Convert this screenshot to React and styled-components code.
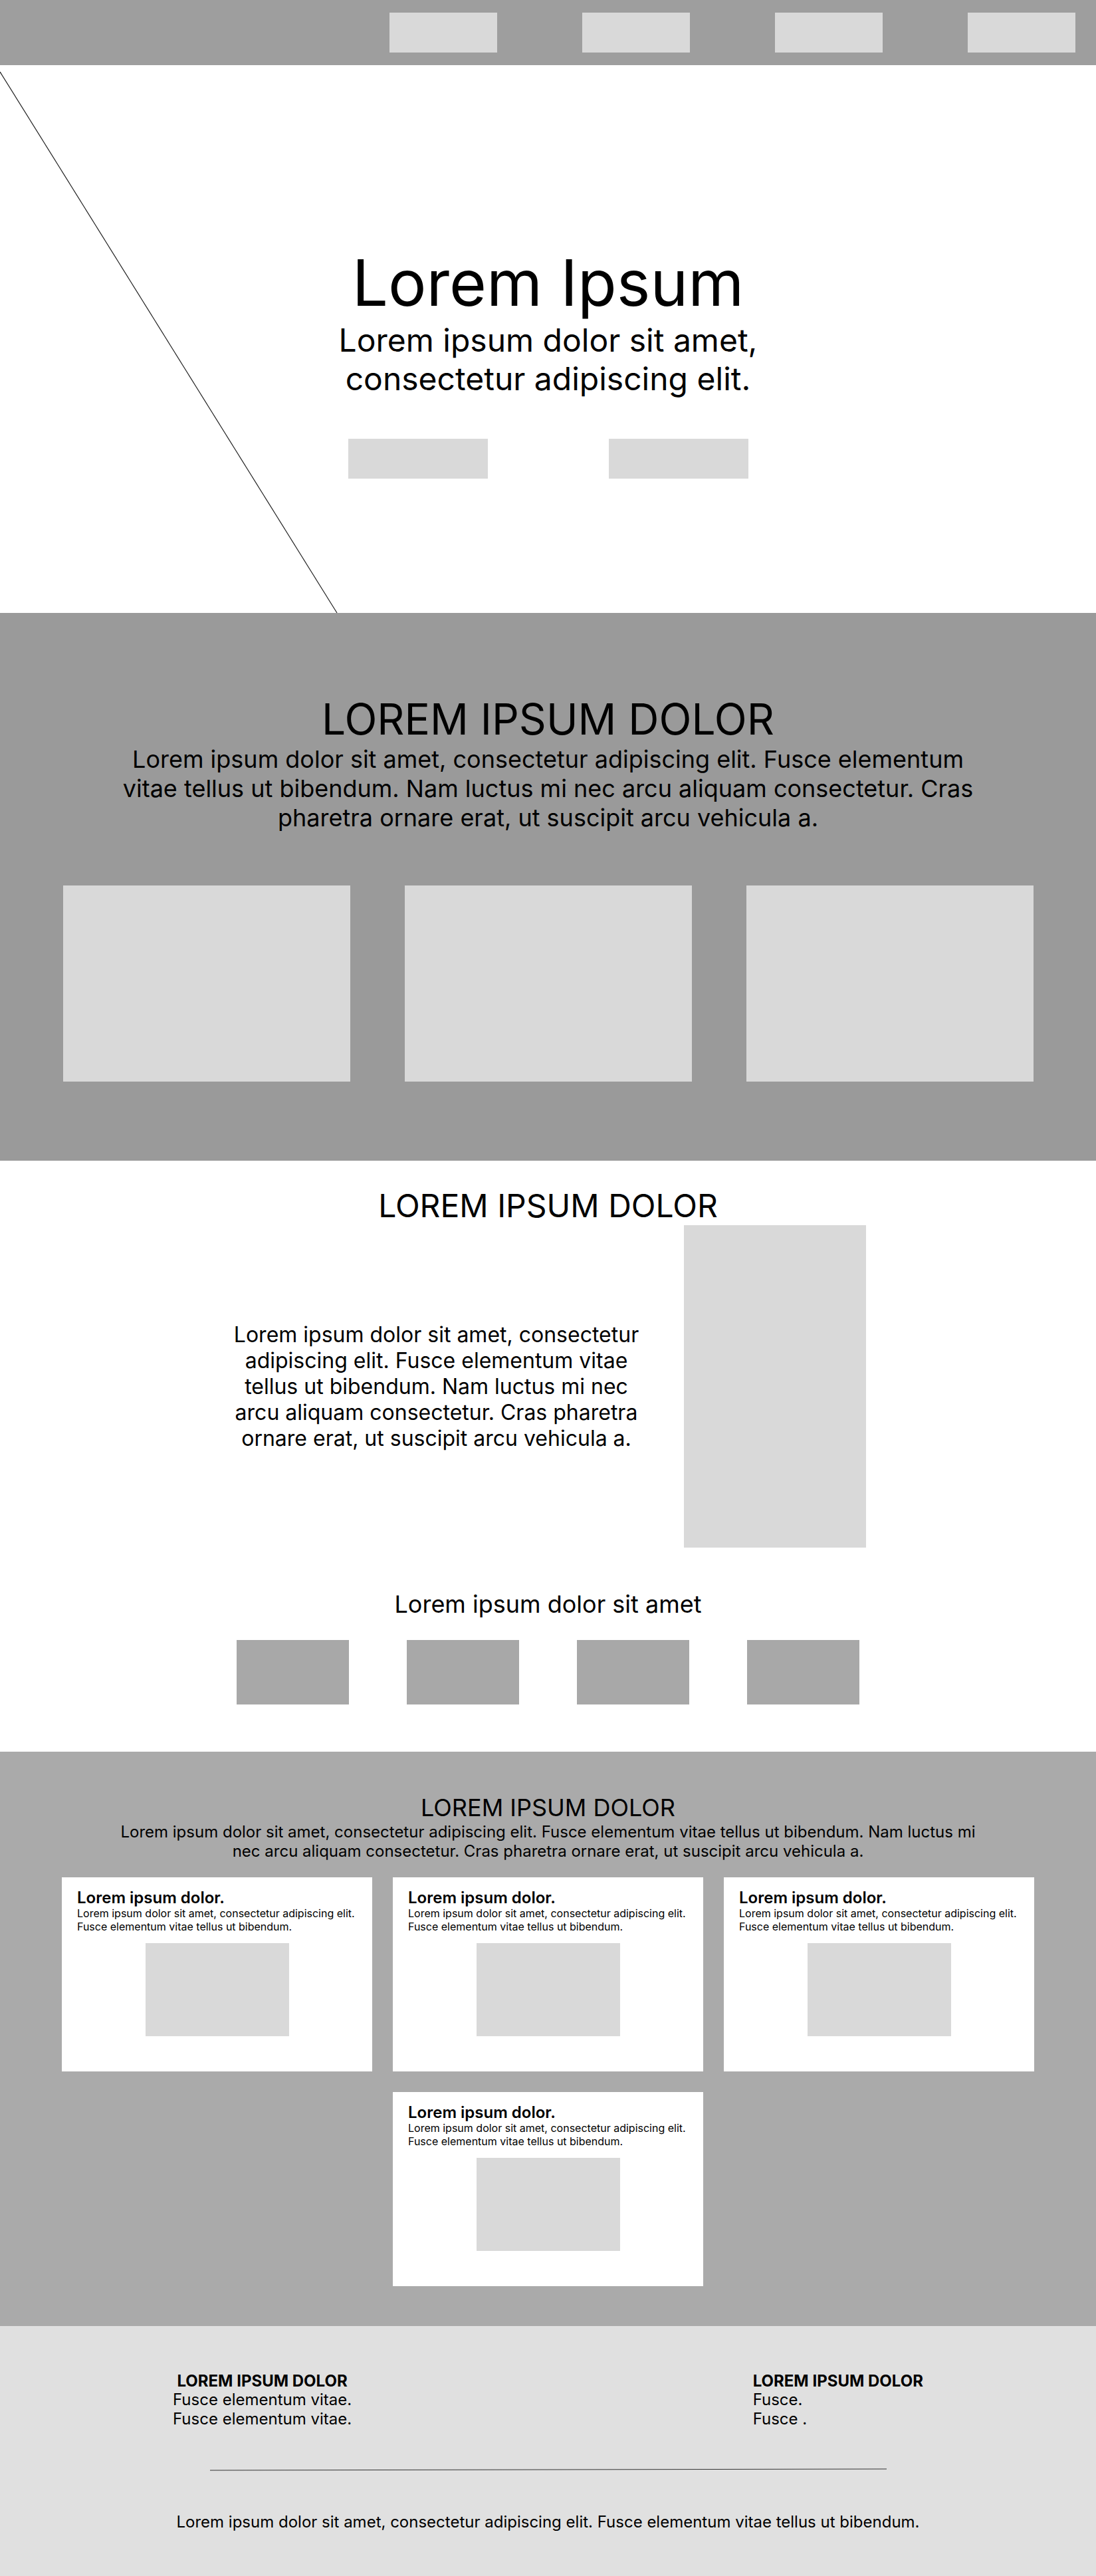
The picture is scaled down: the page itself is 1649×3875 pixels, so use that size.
import styled, { createGlobalStyle } from 'styled-components'

const GlobalStyle = createGlobalStyle`
  html, body {
    margin: 0;
    padding: 0;
    background: #ffffff;
  }
  body {
    font-family: Inter, "Noto Sans", "Liberation Sans", sans-serif;
    color: #000;
  }
  * { box-sizing: border-box; }
`;

const Page = styled.div`
  width: 1649px;
  display: flex;
  flex-direction: column;
`;

/* ---------- nav ---------- */
const NavBar = styled.header`
  height: 98px;
  background: #9e9e9e;
  display: flex;
  justify-content: flex-end;
  align-items: center;
  gap: 128px;
  padding-right: 31px;
`;

const NavButton = styled.div`
  width: 162px;
  height: 60px;
  background: #d9d9d9;
`;

/* ---------- hero ---------- */
const Hero = styled.section`
  position: relative;
  height: 824px;
  padding-top: 269px;
  display: flex;
  flex-direction: column;
  align-items: center;
  overflow: hidden;
`;

const Diagonal = styled.svg`
  position: absolute;
  left: 0;
  top: 0;
  pointer-events: none;
`;

const HeroTitle = styled.h1`
  margin: 0;
  font-size: 96px;
  line-height: 116px;
  font-weight: 400;
  text-align: center;
`;

const HeroSub = styled.p`
  margin: 0;
  font-size: 48px;
  line-height: 58px;
  text-align: center;
`;

const HeroButtons = styled.div`
  display: flex;
  gap: 182px;
  margin-top: 61px;
`;

const HeroButton = styled.div`
  width: 210px;
  height: 60px;
  background: #d9d9d9;
`;

/* ---------- shared ---------- */
const Band = styled.section`
  background: ${props => props.bg || '#fff'};
  padding: ${props => props.pad};
  display: flex;
  flex-direction: column;
  align-items: center;
`;

const Heading = styled.h2`
  margin: 0;
  font-weight: 400;
  font-size: ${props => props.size}px;
  line-height: ${props => Math.round(props.size * 1.21)}px;
  text-align: center;
`;

const Lead = styled.p`
  margin: 0;
  width: 1300px;
  font-size: ${props => props.size}px;
  line-height: ${props => Math.round(props.size * 1.21)}px;
  text-align: center;
`;

const Placeholder = styled.div`
  width: ${props => props.w}px;
  height: ${props => props.h}px;
  background: ${props => props.bg || '#d9d9d9'};
  flex-shrink: 0;
`;

/* ---------- features ---------- */
const FeatureRow = styled.div`
  display: grid;
  grid-template-columns: repeat(3, 432px);
  gap: 82px;
  margin-top: 80px;
`;

/* ---------- about ---------- */
const AboutRow = styled.div`
  display: flex;
  align-items: center;
  gap: 62px;
`;

const AboutText = styled.p`
  margin: 0;
  width: 620px;
  font-size: 32px;
  line-height: 39px;
  text-align: center;
`;

const SubHeading = styled.h3`
  margin: 63px 0 0;
  font-weight: 400;
  font-size: 36px;
  line-height: 44px;
  text-align: center;
`;

const Squares = styled.div`
  display: flex;
  gap: 87px;
  margin-top: 32px;
`;

/* ---------- cards ---------- */
const CardGrid = styled.div`
  width: 1463px;
  display: flex;
  flex-wrap: wrap;
  justify-content: center;
  gap: 31px 31px;
  margin-top: 25px;
`;

const Card = styled.div`
  width: 467px;
  height: 292px;
  background: #fff;
  padding: 16px 23px 0;
  display: flex;
  flex-direction: column;
`;

const CardTitle = styled.h4`
  margin: 0;
  font-size: 24px;
  line-height: 29px;
  font-weight: 600;
`;

const CardBody = styled.p`
  margin: 0;
  font-size: 16px;
  line-height: 19.5px;
  white-space: nowrap;
`;

const CardImage = styled.div`
  width: 216px;
  height: 140px;
  background: #d9d9d9;
  margin: 15px auto 0;
`;

/* ---------- footer ---------- */
const Footer = styled.footer`
  background: #e0e0e0;
  height: 377px;
  padding-top: 69px;
  display: flex;
  flex-direction: column;
  align-items: center;
`;

const FooterCols = styled.div`
  width: 100%;
  padding: 0 260px;
  display: flex;
  justify-content: space-between;
`;

const FooterCol = styled.div`
  display: flex;
  flex-direction: column;
  align-items: ${props => props.center ? 'center' : 'flex-start'};
`;

const FooterHead = styled.div`
  font-size: 24px;
  line-height: 27px;
  font-weight: 700;
`;

const FooterLine = styled.div`
  font-size: 24px;
  line-height: 29px;
`;

const Rule = styled.svg`
  display: block;
  margin-top: 60px;
`;

const Copy = styled.p`
  margin: 62px 0 0;
  font-size: 24px;
  line-height: 29px;
  text-align: center;
`;

const cards = [0, 1, 2, 3];

export default function App() {
  return (
    <Page>
      <GlobalStyle />
      <NavBar>
        <NavButton />
        <NavButton />
        <NavButton />
        <NavButton />
      </NavBar>

      <Hero>
        <Diagonal width="520" height="824" viewBox="0 0 520 824">
          <line x1="0" y1="10" x2="507" y2="824" stroke="#222" strokeWidth="1.2" />
        </Diagonal>
        <HeroTitle>Lorem Ipsum</HeroTitle>
        <HeroSub>Lorem ipsum dolor sit amet,<br />consectetur adipiscing elit.</HeroSub>
        <HeroButtons>
          <HeroButton />
          <HeroButton />
        </HeroButtons>
      </Hero>

      <Band bg="#9a9a9a" pad="121px 0 119px">
        <Heading size={64}>LOREM IPSUM DOLOR</Heading>
        <Lead size={36}>
          Lorem ipsum dolor sit amet, consectetur adipiscing elit. Fusce elementum vitae tellus ut bibendum. Nam luctus mi nec arcu aliquam consectetur. Cras pharetra ornare erat, ut suscipit arcu vehicula a.
        </Lead>
        <FeatureRow>
          <Placeholder w={432} h={295} />
          <Placeholder w={432} h={295} />
          <Placeholder w={432} h={295} />
        </FeatureRow>
      </Band>

      <Band pad="39px 0 71px">
        <Heading size={48}>LOREM IPSUM DOLOR</Heading>
        <AboutRow>
          <AboutText>
            Lorem ipsum dolor sit amet, consectetur adipiscing elit. Fusce elementum vitae tellus ut bibendum. Nam luctus mi nec arcu aliquam consectetur. Cras pharetra ornare erat, ut suscipit arcu vehicula a.
          </AboutText>
          <Placeholder w={274} h={485} />
        </AboutRow>
        <SubHeading>Lorem ipsum dolor sit amet</SubHeading>
        <Squares>
          <Placeholder w={169} h={97} bg="#a8a8a8" />
          <Placeholder w={169} h={97} bg="#a8a8a8" />
          <Placeholder w={169} h={97} bg="#a8a8a8" />
          <Placeholder w={169} h={97} bg="#a8a8a8" />
        </Squares>
      </Band>

      <Band bg="#aaaaaa" pad="62px 0 60px">
        <Heading size={36}>LOREM IPSUM DOLOR</Heading>
        <Lead size={24}>
          Lorem ipsum dolor sit amet, consectetur adipiscing elit. Fusce elementum vitae tellus ut bibendum. Nam luctus mi nec arcu aliquam consectetur. Cras pharetra ornare erat, ut suscipit arcu vehicula a.
        </Lead>
        <CardGrid>
          {cards.map(i => (
            <Card key={i}>
              <CardTitle>Lorem ipsum dolor.</CardTitle>
              <CardBody>
                Lorem ipsum dolor sit amet, consectetur adipiscing elit.<br />
                Fusce elementum vitae tellus ut bibendum.
              </CardBody>
              <CardImage />
            </Card>
          ))}
        </CardGrid>
      </Band>

      <Footer>
        <FooterCols>
          <FooterCol center>
            <FooterHead>LOREM IPSUM DOLOR</FooterHead>
            <FooterLine>Fusce elementum vitae.</FooterLine>
            <FooterLine>Fusce elementum vitae.</FooterLine>
          </FooterCol>
          <FooterCol>
            <FooterHead>LOREM IPSUM DOLOR</FooterHead>
            <FooterLine>Fusce.</FooterLine>
            <FooterLine>Fusce .</FooterLine>
          </FooterCol>
        </FooterCols>
        <Rule width="1018" height="4" viewBox="0 0 1018 4">
          <line x1="0" y1="3" x2="1018" y2="1" stroke="#333" strokeWidth="1" />
        </Rule>
        <Copy>Lorem ipsum dolor sit amet, consectetur adipiscing elit. Fusce elementum vitae tellus ut bibendum.</Copy>
      </Footer>
    </Page>
  )
}
